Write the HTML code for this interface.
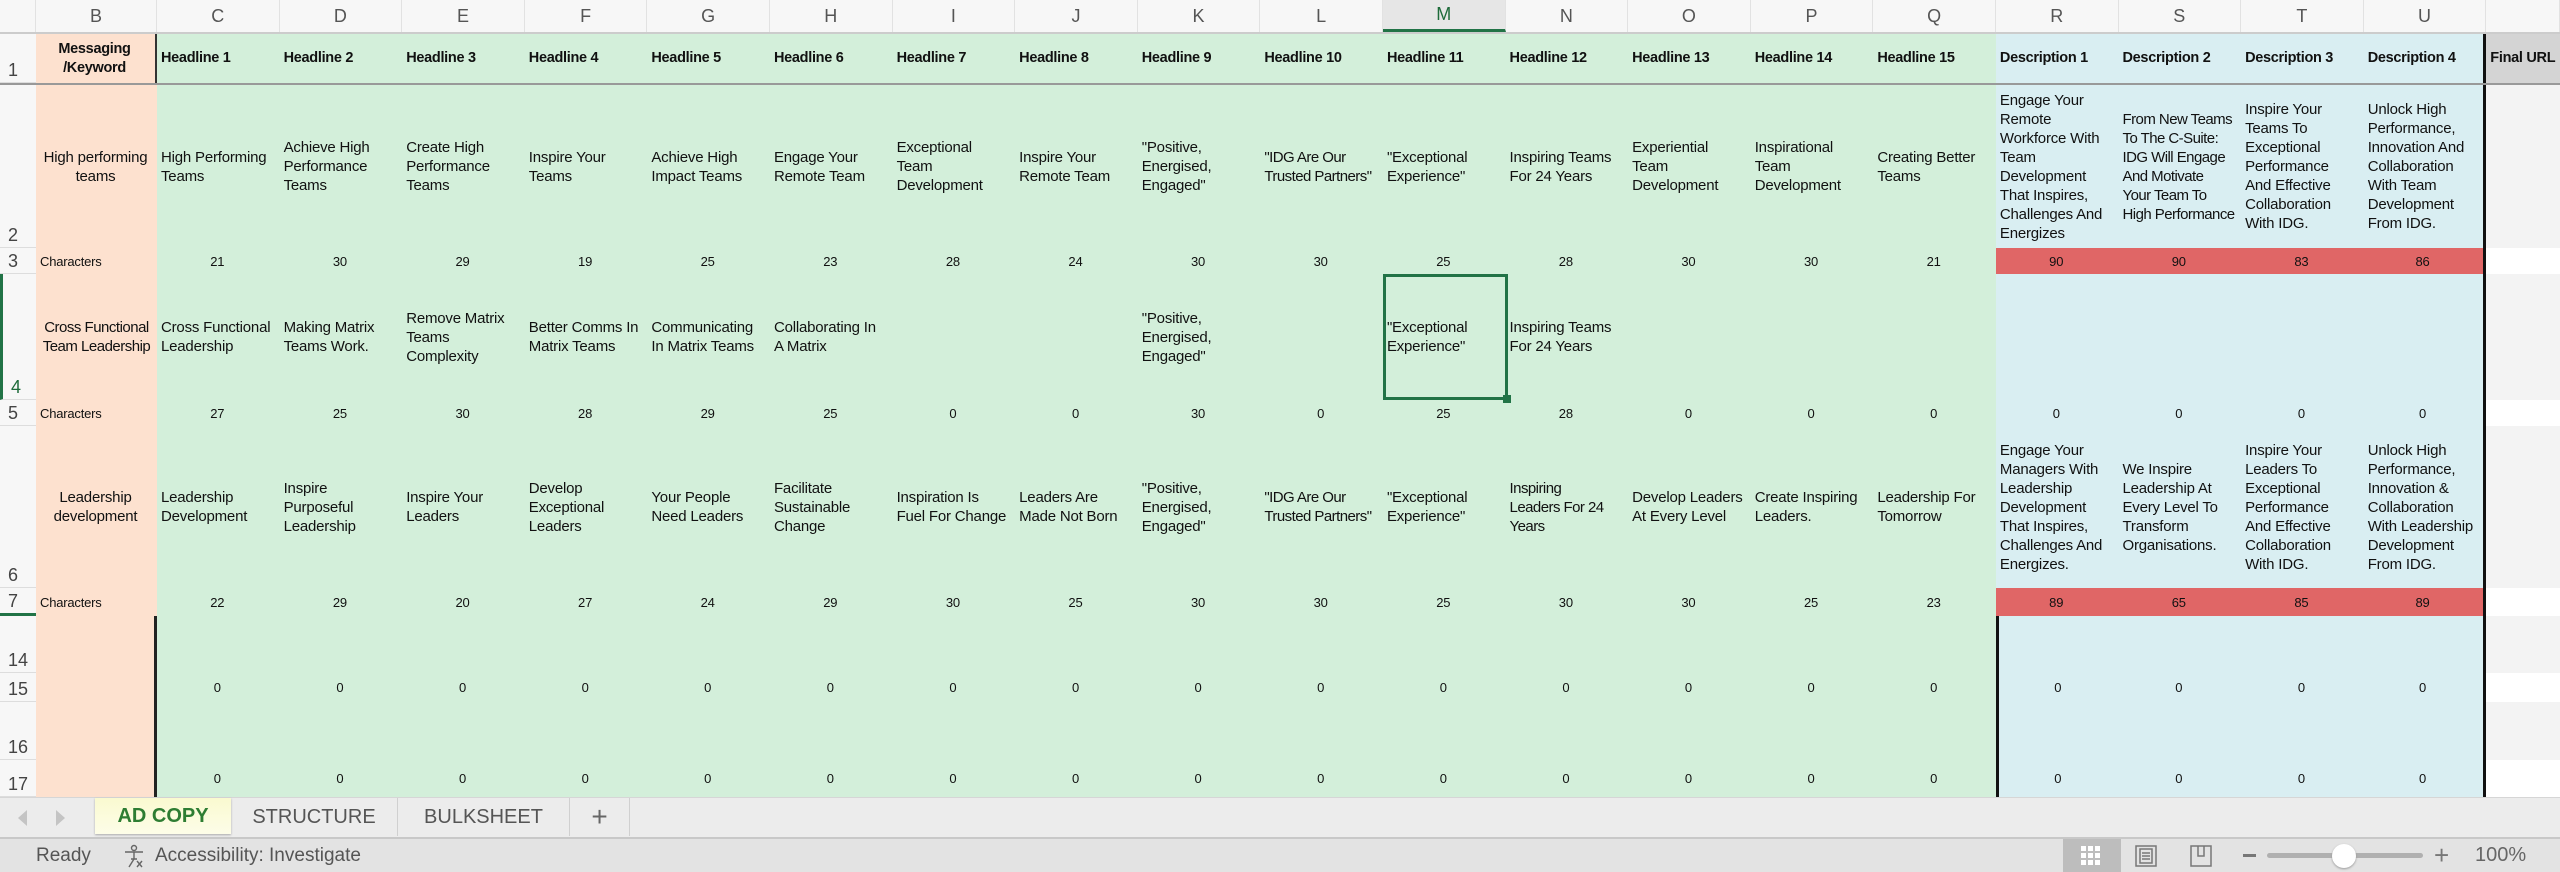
<!DOCTYPE html>
<html><head><meta charset="utf-8"><style>
*{box-sizing:border-box;margin:0;padding:0}
body{width:2560px;height:872px;overflow:hidden;background:#fff;font-family:"Liberation Sans",Arial,sans-serif;position:relative;color:#111}
.row{position:absolute;left:0;width:2560px;display:grid;grid-template-columns:36px 121px repeat(19,122.6px) 1fr}
.row>div{display:flex;align-items:center;overflow:hidden;font-size:15px;letter-spacing:-0.2px;line-height:19px;padding:0 6px 0 4px}
.row>div.nw{white-space:nowrap;letter-spacing:-0.55px;padding-right:0}
.rh{background:#f7f7f7;color:#444;font-size:18px!important;letter-spacing:0!important;align-items:flex-end!important;padding:0 0 2px 8px!important;border-bottom:1px solid #ddd}
.b{background:#fde1cf}
.g{background:#d3efda}
.u{background:#d9eef2}
.r{background:#e06666}
.x{background:#f3f3f3}
.w{background:#fff}
.c{justify-content:center;text-align:center}
.n{justify-content:center;font-size:13px!important}
.hd{font-weight:bold;font-size:14.5px!important;white-space:nowrap;letter-spacing:-0.3px!important}
#colh{position:absolute;top:0;left:0;height:34px;width:2560px;display:grid;grid-template-columns:36px 121px repeat(19,122.6px) 1fr;background:#f7f7f7;border-bottom:2px solid #ccc}
#colh div{display:flex;align-items:center;justify-content:center;color:#555;font-size:18px;border-right:1px solid #e2e2e2}
</style></head><body>
<div id="colh"><div></div><div>B</div><div>C</div><div>D</div><div>E</div><div>F</div><div>G</div><div>H</div><div>I</div><div>J</div><div>K</div><div>L</div><div style="color:#1e6b3a;background:#e6e6e6;border-bottom:3px solid #217346">M</div><div>N</div><div>O</div><div>P</div><div>Q</div><div>R</div><div>S</div><div>T</div><div>U</div><div></div></div>

<div class="row" style="top:34px;height:51px;border-bottom:2px solid #999">
<div class="rh">1</div><div class="b c hd" style="border-right:2px solid #333;white-space:normal">Messaging<br>/Keyword</div>
<div class="g hd">Headline 1</div><div class="g hd">Headline 2</div><div class="g hd">Headline 3</div><div class="g hd">Headline 4</div><div class="g hd">Headline 5</div><div class="g hd">Headline 6</div><div class="g hd">Headline 7</div><div class="g hd">Headline 8</div><div class="g hd">Headline 9</div><div class="g hd">Headline 10</div><div class="g hd">Headline 11</div><div class="g hd">Headline 12</div><div class="g hd">Headline 13</div><div class="g hd">Headline 14</div><div class="g hd">Headline 15</div>
<div class="u hd">Description 1</div><div class="u hd">Description 2</div><div class="u hd">Description 3</div><div class="u hd" style="border-right:3px solid #111">Description 4</div><div class="hd" style="background:#d4d4d4">Final URL</div></div>

<div class="row" style="top:85px;height:163px">
<div class="rh">2</div><div class="b c">High performing teams</div>
<div class="g">High Performing Teams</div><div class="g">Achieve High Performance Teams</div><div class="g">Create High Performance Teams</div><div class="g">Inspire Your Teams</div><div class="g">Achieve High Impact Teams</div><div class="g">Engage Your Remote Team</div><div class="g">Exceptional Team Development</div><div class="g">Inspire Your Remote Team</div><div class="g">"Positive, Energised, Engaged"</div><div class="g nw">"IDG Are Our<br>Trusted Partners"</div><div class="g">"Exceptional Experience"</div><div class="g">Inspiring Teams For 24 Years</div><div class="g">Experiential Team Development</div><div class="g">Inspirational Team Development</div><div class="g">Creating Better Teams</div>
<div class="u">Engage Your Remote Workforce With Team Development That Inspires, Challenges And Energizes</div><div class="u nw">From New Teams<br>To The C-Suite:<br>IDG Will Engage<br>And Motivate<br>Your Team To<br>High Performance</div><div class="u">Inspire Your Teams To Exceptional Performance And Effective Collaboration With IDG.</div><div class="u" style="border-right:3px solid #111">Unlock High Performance, Innovation And Collaboration With Team Development From IDG.</div><div class="x"></div></div>

<div class="row" style="top:248px;height:26px">
<div class="rh">3</div><div class="b" style="font-size:13px">Characters</div>
<div class="g n">21</div><div class="g n">30</div><div class="g n">29</div><div class="g n">19</div><div class="g n">25</div><div class="g n">23</div><div class="g n">28</div><div class="g n">24</div><div class="g n">30</div><div class="g n">30</div><div class="g n">25</div><div class="g n">28</div><div class="g n">30</div><div class="g n">30</div><div class="g n">21</div>
<div class="r n">90</div><div class="r n">90</div><div class="r n">83</div><div class="r n" style="border-right:3px solid #111">86</div><div class="w"></div></div>

<div class="row" style="top:274px;height:126px">
<div class="rh" style="color:#1e6b3a;border-left:3px solid #217346">4</div><div class="b c" style="padding:0 1px;letter-spacing:-0.5px">Cross Functional Team Leadership</div>
<div class="g">Cross Functional Leadership</div><div class="g">Making Matrix Teams Work.</div><div class="g">Remove Matrix Teams Complexity</div><div class="g">Better Comms In Matrix Teams</div><div class="g">Communicating In Matrix Teams</div><div class="g">Collaborating In A Matrix</div><div class="g"></div><div class="g"></div><div class="g">"Positive, Energised, Engaged"</div><div class="g"></div><div class="g">"Exceptional Experience"</div><div class="g">Inspiring Teams For 24 Years</div><div class="g"></div><div class="g"></div><div class="g"></div>
<div class="u"></div><div class="u"></div><div class="u"></div><div class="u" style="border-right:3px solid #111"></div><div class="x"></div></div>

<div class="row" style="top:400px;height:26px">
<div class="rh">5</div><div class="b" style="font-size:13px">Characters</div>
<div class="g n">27</div><div class="g n">25</div><div class="g n">30</div><div class="g n">28</div><div class="g n">29</div><div class="g n">25</div><div class="g n">0</div><div class="g n">0</div><div class="g n">30</div><div class="g n">0</div><div class="g n">25</div><div class="g n">28</div><div class="g n">0</div><div class="g n">0</div><div class="g n">0</div>
<div class="u n">0</div><div class="u n">0</div><div class="u n">0</div><div class="u n" style="border-right:3px solid #111">0</div><div class="w"></div></div>

<div class="row" style="top:426px;height:162px">
<div class="rh">6</div><div class="b c">Leadership development</div>
<div class="g">Leadership Development</div><div class="g">Inspire Purposeful Leadership</div><div class="g">Inspire Your Leaders</div><div class="g">Develop Exceptional Leaders</div><div class="g">Your People Need Leaders</div><div class="g">Facilitate Sustainable Change</div><div class="g">Inspiration Is Fuel For Change</div><div class="g">Leaders Are Made Not Born</div><div class="g">"Positive, Energised, Engaged"</div><div class="g nw">"IDG Are Our<br>Trusted Partners"</div><div class="g">"Exceptional Experience"</div><div class="g nw">Inspiring<br>Leaders For 24<br>Years</div><div class="g">Develop Leaders At Every Level</div><div class="g">Create Inspiring Leaders.</div><div class="g">Leadership For Tomorrow</div>
<div class="u">Engage Your Managers With Leadership Development That Inspires, Challenges And Energizes.</div><div class="u">We Inspire Leadership At Every Level To Transform Organisations.</div><div class="u">Inspire Your Leaders To Exceptional Performance And Effective Collaboration With IDG.</div><div class="u" style="border-right:3px solid #111">Unlock High Performance, Innovation &amp; Collaboration With Leadership Development From IDG.</div><div class="x"></div></div>

<div class="row" style="top:588px;height:28px">
<div class="rh" style="border-bottom:3px solid #217346">7</div><div class="b" style="font-size:13px">Characters</div>
<div class="g n">22</div><div class="g n">29</div><div class="g n">20</div><div class="g n">27</div><div class="g n">24</div><div class="g n">29</div><div class="g n">30</div><div class="g n">25</div><div class="g n">30</div><div class="g n">30</div><div class="g n">25</div><div class="g n">30</div><div class="g n">30</div><div class="g n">25</div><div class="g n">23</div>
<div class="r n">89</div><div class="r n">65</div><div class="r n">85</div><div class="r n" style="border-right:3px solid #111">89</div><div class="w"></div></div>

<div class="row" style="top:616px;height:57px">
<div class="rh">14</div><div class="b" style="border-right:3px solid #222"></div>
<div class="g"></div><div class="g"></div><div class="g"></div><div class="g"></div><div class="g"></div><div class="g"></div><div class="g"></div><div class="g"></div><div class="g"></div><div class="g"></div><div class="g"></div><div class="g"></div><div class="g"></div><div class="g"></div><div class="g"></div>
<div class="u" style="border-left:3px solid #111"></div><div class="u"></div><div class="u"></div><div class="u" style="border-right:3px solid #111"></div><div class="x"></div></div>

<div class="row" style="top:673px;height:29px">
<div class="rh">15</div><div class="b" style="border-right:3px solid #222"></div>
<div class="g n">0</div><div class="g n">0</div><div class="g n">0</div><div class="g n">0</div><div class="g n">0</div><div class="g n">0</div><div class="g n">0</div><div class="g n">0</div><div class="g n">0</div><div class="g n">0</div><div class="g n">0</div><div class="g n">0</div><div class="g n">0</div><div class="g n">0</div><div class="g n">0</div>
<div class="u n" style="border-left:3px solid #111">0</div><div class="u n">0</div><div class="u n">0</div><div class="u n" style="border-right:3px solid #111">0</div><div class="w"></div></div>

<div class="row" style="top:702px;height:58px">
<div class="rh">16</div><div class="b" style="border-right:3px solid #222"></div>
<div class="g"></div><div class="g"></div><div class="g"></div><div class="g"></div><div class="g"></div><div class="g"></div><div class="g"></div><div class="g"></div><div class="g"></div><div class="g"></div><div class="g"></div><div class="g"></div><div class="g"></div><div class="g"></div><div class="g"></div>
<div class="u" style="border-left:3px solid #111"></div><div class="u"></div><div class="u"></div><div class="u" style="border-right:3px solid #111"></div><div class="x"></div></div>

<div class="row" style="top:760px;height:37px">
<div class="rh">17</div><div class="b" style="border-right:3px solid #222"></div>
<div class="g n">0</div><div class="g n">0</div><div class="g n">0</div><div class="g n">0</div><div class="g n">0</div><div class="g n">0</div><div class="g n">0</div><div class="g n">0</div><div class="g n">0</div><div class="g n">0</div><div class="g n">0</div><div class="g n">0</div><div class="g n">0</div><div class="g n">0</div><div class="g n">0</div>
<div class="u n" style="border-left:3px solid #111">0</div><div class="u n">0</div><div class="u n">0</div><div class="u n" style="border-right:3px solid #111">0</div><div class="w"></div></div>

<!-- selection -->
<div style="position:absolute;left:1383px;top:274px;width:125px;height:126px;border:3px solid #217346"></div>
<div style="position:absolute;left:1503px;top:395px;width:8px;height:8px;background:#217346"></div>

<!-- tab bar -->
<div style="position:absolute;left:0;top:797px;width:2560px;height:42px;background:#ececec;border-top:1px solid #d6d6d6;border-bottom:2px solid #c8c8c8">
<div style="position:absolute;left:18px;top:12px;width:0;height:0;border-top:8px solid transparent;border-bottom:8px solid transparent;border-right:9px solid #c4c4c4"></div>
<div style="position:absolute;left:56px;top:12px;width:0;height:0;border-top:8px solid transparent;border-bottom:8px solid transparent;border-left:9px solid #c4c4c4"></div>
<div style="position:absolute;left:95px;top:0;width:136px;height:36px;background:linear-gradient(#fafad0,#fdfde8);box-shadow:0 1px 2px #aaa;color:#2e7d32;font-weight:bold;font-size:20px;display:flex;align-items:center;justify-content:center">AD COPY</div>
<div style="position:absolute;left:231px;top:0;width:167px;height:38px;color:#555;font-size:20px;display:flex;align-items:center;justify-content:center;border-right:1px solid #d0d0d0">STRUCTURE</div>
<div style="position:absolute;left:398px;top:0;width:172px;height:38px;color:#555;font-size:20px;display:flex;align-items:center;justify-content:center;border-right:1px solid #d0d0d0">BULKSHEET</div>
<div style="position:absolute;left:570px;top:0;width:60px;height:38px;color:#666;font-size:28px;display:flex;align-items:center;justify-content:center;border-right:1px solid #d0d0d0">+</div>
</div>

<!-- status bar -->
<div style="position:absolute;left:0;top:839px;width:2560px;height:33px;background:#e3e3e3;color:#555;font-size:19px">
<div style="position:absolute;left:36px;top:6px">Ready</div>
<svg style="position:absolute;left:122px;top:5px" width="24" height="24" viewBox="0 0 24 24" fill="none" stroke="#666" stroke-width="1.4"><circle cx="12" cy="4" r="2.5"/><path d="M3 8h18M12 8v7M12 15l-5 8M9 15h6M15 17l5 6M20 17l-5 6"/></svg>
<div style="position:absolute;left:155px;top:6px">Accessibility: Investigate</div>
<div style="position:absolute;left:2063px;top:0;width:58px;height:33px;background:#bdbdbd"></div>
<svg style="position:absolute;left:2081px;top:7px" width="20" height="20" viewBox="0 0 20 20" fill="#fff"><rect x="0" y="0" width="5" height="5"/><rect x="7" y="0" width="5" height="5"/><rect x="14" y="0" width="5" height="5"/><rect x="0" y="7" width="5" height="5"/><rect x="7" y="7" width="5" height="5"/><rect x="14" y="7" width="5" height="5"/><rect x="0" y="14" width="5" height="5"/><rect x="7" y="14" width="5" height="5"/><rect x="14" y="14" width="5" height="5"/></svg>
<svg style="position:absolute;left:2135px;top:6px" width="22" height="22" viewBox="0 0 22 22" fill="none" stroke="#777" stroke-width="1.5"><rect x="1" y="1" width="20" height="20"/><rect x="5" y="4" width="12" height="14"/><path d="M7 8h8M7 11h8M7 14h8"/></svg>
<svg style="position:absolute;left:2190px;top:6px" width="22" height="22" viewBox="0 0 22 22" fill="none" stroke="#777" stroke-width="1.5"><rect x="1" y="1" width="20" height="20"/><path d="M8 1v10h6V1"/></svg>
<div style="position:absolute;left:2243px;top:15px;width:13px;height:3px;background:#777"></div>
<div style="position:absolute;left:2267px;top:14px;width:156px;height:5px;border-radius:3px;background:#b0b0b0"></div>
<div style="position:absolute;left:2332px;top:5px;width:24px;height:24px;border-radius:12px;background:#fff;box-shadow:0 1px 2px #999"></div>
<div style="position:absolute;left:2434px;top:1px;font-size:26px;color:#777">+</div>
<div style="position:absolute;left:2475px;top:5px;font-size:20px;color:#666">100%</div>
</div>
</body></html>
